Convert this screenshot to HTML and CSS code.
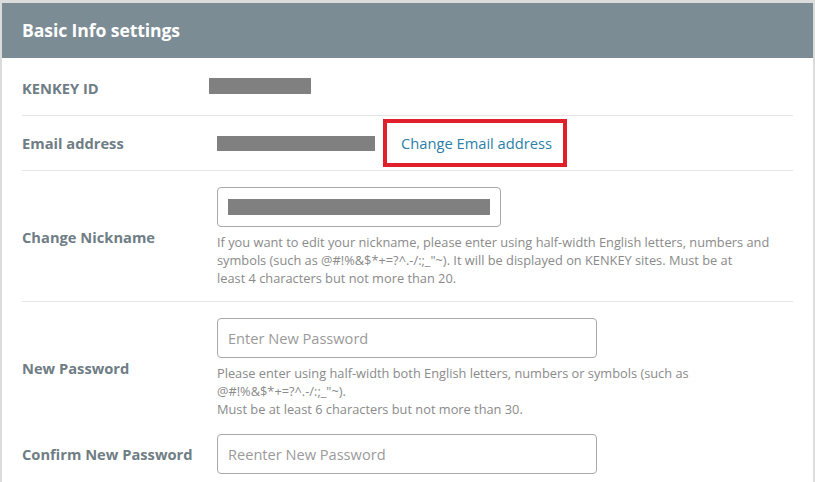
FILE: index.html
```html
<!DOCTYPE html>
<html>
<head>
<meta charset="utf-8">
<link rel="stylesheet" href="styles.css">
</head>
<body>
<div class="panel">
  <div class="panel-head">Basic Info settings</div>
  <div class="panel-body">
    <div class="row row-id">
      <div class="label">KENKEY ID</div>
      <div class="value"><span class="redact redact-id"></span></div>
    </div>
    <div class="row row-email">
      <div class="label">Email address</div>
      <div class="value value-email">
        <span class="redact redact-email"></span>
        <span class="highlight"><a class="link" href="#">Change Email address</a></span>
      </div>
    </div>
    <div class="row row-nick">
      <div class="label">Change Nickname</div>
      <div class="value">
        <div class="input input-nick"><span class="redact redact-nick"></span></div>
        <p class="help help-nick">If you want to edit your nickname, please enter using half-width English letters, numbers and symbols (such as @#!%&amp;$*+=?^.-/:;_"~). It will be displayed on KENKEY sites. Must be at<br>least 4 characters but not more than 20.</p>
      </div>
    </div>
    <div class="row row-pw">
      <div class="label">New Password</div>
      <div class="value">
        <input class="input input-pw" type="text" placeholder="Enter New Password">
        <p class="help help-pw">Please enter using half-width both English letters, numbers or symbols (such as @#!%&amp;$*+=?^.-/:;_"~).<br>Must be at least 6 characters but not more than 30.</p>
      </div>
    </div>
    <div class="row row-confirm">
      <div class="label">Confirm New Password</div>
      <div class="value">
        <input class="input input-pw" type="text" placeholder="Reenter New Password">
      </div>
    </div>
  </div>
</div>
</body>
</html>
```
FILE: styles.css
```css
html, body {
  margin: 0;
  padding: 0;
  background: #ffffff;
}
body {
  font-family: "Open Sans", "Noto Sans", sans-serif;
  color: #6f7d85;
}
.panel {
  width: 811px;
  border: 2px solid #dcdcdc;
  border-top-width: 3px;
  border-bottom: none;
  height: 479px;
  overflow: hidden;
}
.panel-head {
  background: #7b8c94;
  color: #ffffff;
  font-weight: 700;
  font-size: 17.6px;
  height: 55px;
  line-height: 55px;
  padding-left: 20px;
  letter-spacing: -0.1px;
}
.panel-body {
  padding: 0 20px;
}
.row {
  display: flex;
  align-items: center;
  border-bottom: 1px solid #e6e6e6;
}
.row-id { height: 58px; padding-top: 2px; box-sizing: border-box; }
.row-email { height: 54px; }
.row-nick { height: 131px; padding-top: 1px; box-sizing: border-box; }
.row-pw { padding: 16px 0 0; border-bottom: none; }
.row-confirm { border-bottom: none; padding: 16px 0 14px; }
.label {
  width: 195px;
  flex: none;
  font-weight: 700;
  font-size: 14.7px;
  color: #6f7d85;
}
.value { flex: 1; }
.redact {
  display: inline-block;
  background: #808080;
  height: 16px;
}
.redact-id { width: 102px; margin-left: -8px; }
.value-email { display: flex; align-items: center; }
.redact-email { width: 158px; height: 15px; }
.highlight {
  margin-left: 8px;
  border: 4px solid #e0202a;
  padding: 9px 11px 9px 14px;
}
.link {
  color: #2b7fa8;
  text-decoration: none;
  font-size: 14.7px;
}
.input {
  box-sizing: border-box;
  height: 40px;
  border: 1px solid #a9a9a9;
  border-radius: 4px;
  font-family: inherit;
  font-size: 14.6px;
  padding: 0 10px;
  color: #555;
  display: block;
}
.input::placeholder { color: #9a9a9a; }
.input-nick { width: 284px; display: flex; align-items: center; }
.redact-nick { width: 262px; }
.input-pw { width: 380px; }
.help {
  margin: 6px 0 0;
  font-size: 12.8px;
  line-height: 18px;
  color: #8a8a8a;
}
.help-nick { max-width: 562px; }
.help-pw { width: 500px; }
```
